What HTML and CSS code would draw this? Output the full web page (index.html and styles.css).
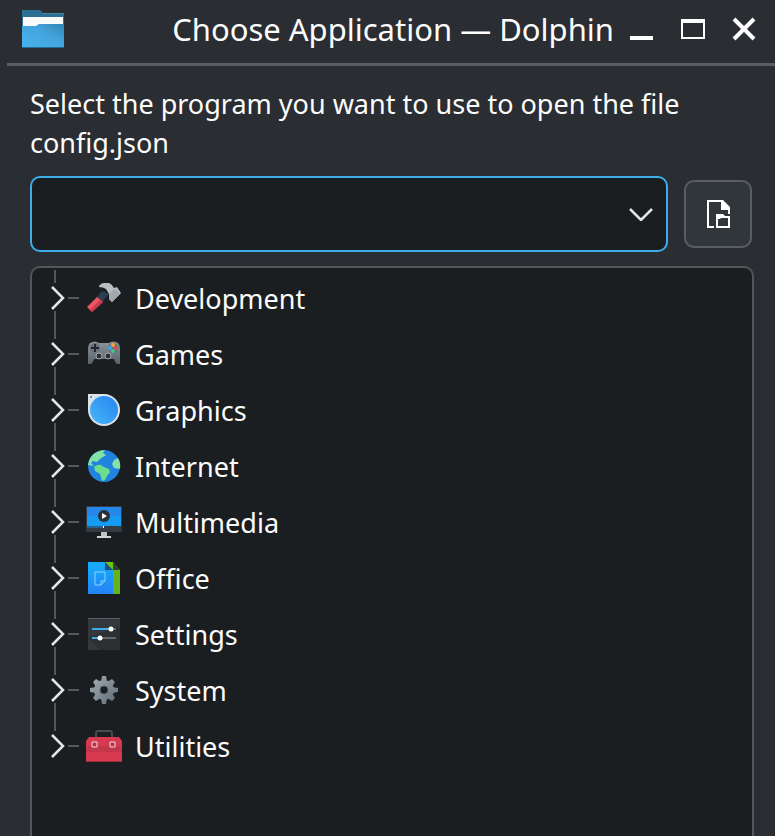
FILE: index.html
```html
<!DOCTYPE html>
<html lang="en">
    <head>
        <meta charset="UTF-8" />
        <meta name="viewport" content="width=device-width, initial-scale=1.0" />
        <title>Choose Application — Dolphin</title>
        <link rel="stylesheet" href="styles.css">
    </head>
    <body>
        <!-- shared tree branch shapes -->
        <svg class="defs" aria-hidden="true">
            <symbol id="branch" viewBox="0 0 32 56">
                <path d="M7 0v13M7 41v15M20 28h11" stroke="#54575a" stroke-width="2" fill="none"/>
                <path d="M4 17l11 11L4 39" stroke="#e4e5e6" stroke-width="2.500" fill="none"/>
            </symbol>
            <symbol id="branch-end" viewBox="0 0 32 56">
                <path d="M7 0v13M20 28h11" stroke="#54575a" stroke-width="2" fill="none"/>
                <path d="M4 17l11 11L4 39" stroke="#e4e5e6" stroke-width="2.500" fill="none"/>
            </symbol>
        </svg>

        <div class="window">
            <header class="titlebar">
                <svg class="app-icon" viewBox="0 0 42 38">
                    <defs>
                        <linearGradient id="folder" x1="0" y1="1" x2="1" y2="0">
                            <stop offset="0" stop-color="#48b4f0"/>
                            <stop offset=".6" stop-color="#43a4dc"/>
                            <stop offset="1" stop-color="#3187b6"/>
                        </linearGradient>
                    </defs>
                    <path d="M0 0h18l3 3h21v20H0z" fill="#2b6f93"/>
                    <path d="M21 3h21v1H21z" fill="#4585a6"/>
                    <path d="M1 7h40v12H1z" fill="#fafafa"/>
                    <path d="M0 16h14l3-2h25v24H0z" fill="url(#folder)"/>
                    <path d="M0 37h42v1H0z" fill="#246b94"/>
                </svg>
                <h1>Choose Application — Dolphin</h1>
                <div class="window-buttons">
                    <button type="button" aria-label="Minimize">
                        <svg viewBox="0 0 24 24"><path d="M0 19h23v4H0z" fill="#fff"/></svg>
                    </button>
                    <button type="button" aria-label="Maximize">
                        <svg viewBox="0 0 24 24"><path d="M0 2h24v20H0zM2 6v14h20V6z" fill="#fff" fill-rule="evenodd"/></svg>
                    </button>
                    <button type="button" aria-label="Close">
                        <svg viewBox="0 0 24 24"><path d="M2 2l20 20M22 2L2 22" stroke="#fff" stroke-width="4"/></svg>
                    </button>
                </div>
            </header>

            <main class="content">
                <label for="program">Select the program you want to use to open the file config.json</label>
                <div class="chooser">
                    <div class="combo">
                        <input type="text" id="program" />
                        <button type="button" aria-label="Show history">
                            <svg viewBox="0 0 24 14"><path d="M1 2l11 11L23 2" stroke="#e4e5e6" stroke-width="2.500" fill="none"/></svg>
                        </button>
                    </div>
                    <button type="button" class="browse" aria-label="Open file dialog">
                        <svg viewBox="0 0 24 28">
                            <path d="M1 0h16l7 7v7h-2v-4h-7V2H3v24h5v2H1z" fill="#fff"/>
                            <path d="M10 14h7l2 2h5v12H10zm2 5v7h10v-8h-7l-1 1z" fill="#fff" fill-rule="evenodd"/>
                        </svg>
                    </button>
                </div>

                <ul class="tree">
                    <li>
                        <button type="button" aria-label="Expand Development"><svg><use href="#branch"/></svg></button>
                        <svg class="icon" viewBox="0 0 36 36">
                            <path d="M11 17l5-6 7 3-7 8z" fill="#2c3e50"/>
                            <path d="M1 27l10-10 6 5-11 10z" fill="#ed5565"/>
                            <path d="M4 30l10-10 3 2-11 10z" fill="#c93b4d"/>
                            <path d="M13 6q2-3 5-3h5q3 1 5 5l3-1 4 6-9 9-3-3v-5l-3-5q-3-2-7-2z" fill="#b9bfc3"/>
                            <path d="M23 14l5-5 3 1 3 4-8 8-3-3z" fill="#a2a9ae"/>
                        </svg>
                        <span>Development</span>
                    </li>
                    <li>
                        <button type="button" aria-label="Expand Games"><svg><use href="#branch"/></svg></button>
                        <svg class="icon" viewBox="0 0 36 36">
                            <defs>
                                <linearGradient id="pad" x1="0" y1="0" x2="0" y2="1">
                                    <stop offset="0" stop-color="#8b949b"/>
                                    <stop offset="1" stop-color="#59636b"/>
                                </linearGradient>
                            </defs>
                            <path d="M4 7q5-3 9 0h10q4-3 9 0 2 2 2 7v14h-3q-2-1-3-5H8q-1 4-3 5H2V14q0-5 2-7z" fill="url(#pad)"/>
                            <circle cx="9" cy="12" r="5" fill="#69727a"/>
                            <path d="M8 8h2v3h3v2h-3v3H8v-3H5v-2h3z" fill="#22272b"/>
                            <circle cx="27" cy="12" r="5" fill="#69727a"/>
                            <circle cx="27" cy="9" r="2" fill="#f9a33d"/>
                            <circle cx="24" cy="12" r="2" fill="#38a7ef"/>
                            <circle cx="30" cy="12" r="2" fill="#e04a5b"/>
                            <circle cx="27" cy="15" r="2" fill="#4ac58c"/>
                            <g fill="#2c3135" stroke="#a4abb0">
                                <circle cx="13" cy="20" r="3"/>
                                <circle cx="22" cy="20" r="3"/>
                            </g>
                        </svg>
                        <span>Games</span>
                    </li>
                    <li>
                        <button type="button" aria-label="Expand Graphics"><svg><use href="#branch"/></svg></button>
                        <svg class="icon" viewBox="0 0 36 36">
                            <defs>
                                <linearGradient id="lens" x1="0" y1="1" x2="1" y2="0">
                                    <stop offset="0" stop-color="#47b9fc"/>
                                    <stop offset="1" stop-color="#2583ed"/>
                                </linearGradient>
                            </defs>
                            <path d="M2 2h16a16 16 0 1 1-16 16z" fill="#dce1e5"/>
                            <circle cx="18" cy="18" r="14" fill="url(#lens)"/>
                            <circle cx="5" cy="5" r="1" fill="#2583ed"/>
                        </svg>
                        <span>Graphics</span>
                    </li>
                    <li>
                        <button type="button" aria-label="Expand Internet"><svg><use href="#branch"/></svg></button>
                        <svg class="icon" viewBox="0 0 36 36">
                            <circle cx="18" cy="18" r="16" fill="#1f83df"/>
                            <path d="M2 17q1-8 7-12 5-3 10-3l-2 3 3 2-6 4-3 3-4-1-2 2 3 3z" fill="#82e2a6"/>
                            <path d="M8 19q3-3 7-2l3 2 5 2 1 3-3 4-2 4-3 1-2-7-5-3z" fill="#6ddc8e"/>
                            <path d="M32 10l-4 2-2 4 2 4 6 1q1-6-2-11z" fill="#82e2a6"/>
                        </svg>
                        <span>Internet</span>
                    </li>
                    <li>
                        <button type="button" aria-label="Expand Multimedia"><svg><use href="#branch"/></svg></button>
                        <svg class="icon" viewBox="0 0 36 36">
                            <path d="M0 2h36v26H0z" fill="#343b42"/>
                            <path d="M1 3h34v19H1z" fill="#159bf1"/>
                            <path d="M1 3h34v9H1z" fill="#2588e8"/>
                            <path d="M1 22h17v2H1z" fill="#23648e"/>
                            <path d="M17 22h1v2h-1z" fill="#fff"/>
                            <circle cx="18" cy="12" r="6" fill="#2b3035"/>
                            <path d="M16 9l5 3-5 3z" fill="#fff"/>
                            <path d="M15 28h6v4h-6z" fill="#bfc4c8"/>
                            <path d="M11 32h14v2H11z" fill="#d2d5d7"/>
                        </svg>
                        <span>Multimedia</span>
                    </li>
                    <li>
                        <button type="button" aria-label="Expand Office"><svg><use href="#branch"/></svg></button>
                        <svg class="icon" viewBox="0 0 36 36">
                            <defs>
                                <linearGradient id="page" x1="0" y1="0" x2="0" y2="1">
                                    <stop offset="0" stop-color="#16aefb"/>
                                    <stop offset="1" stop-color="#2483f4"/>
                                </linearGradient>
                            </defs>
                            <path d="M19 2h8l7 8v24H19z" fill="#62b31d"/>
                            <path d="M2 2h17l8 8v24H2z" fill="url(#page)"/>
                            <path d="M19 2l8 8V2z" fill="#6cc70b"/>
                            <path d="M27 2l7 8h-7z" fill="#363d39"/>
                            <path d="M19 2l8 8h-8z" fill="#214f78"/>
                            <path d="M9 12h10v9l-4 4H9zM15 25v-4h4" fill="none" stroke="#8dd3ff"/>
                        </svg>
                        <span>Office</span>
                    </li>
                    <li>
                        <button type="button" aria-label="Expand Settings"><svg><use href="#branch"/></svg></button>
                        <svg class="icon" viewBox="0 0 36 36">
                            <path d="M2 2h32v32H2z" fill="#34383c"/>
                            <path d="M2 2h32v1H2z" fill="#5b5f62"/>
                            <path d="M2 22l30-12 2 2v22H14z" fill="#2c3033"/>
                            <path d="M6 13h24M6 22h24" stroke="#64686b" stroke-width="2"/>
                            <path d="M6 13h18M6 22h8" stroke="#3daee9" stroke-width="2"/>
                            <circle cx="25" cy="13" r="2.500" fill="#fff"/>
                            <circle cx="14" cy="22" r="2.500" fill="#fff"/>
                        </svg>
                        <span>Settings</span>
                    </li>
                    <li>
                        <button type="button" aria-label="Expand System"><svg><use href="#branch"/></svg></button>
                        <svg class="icon" viewBox="0 0 36 36">
                            <defs>
                                <linearGradient id="gear" x1="0" y1="0" x2="1" y2="1">
                                    <stop offset="0" stop-color="#a0a9b0"/>
                                    <stop offset="1" stop-color="#637079"/>
                                </linearGradient>
                            </defs>
                            <g fill="url(#gear)">
                                <circle cx="18" cy="18" r="10"/>
                                <path d="M16 4h4l1 6h-6zM16 32h4l1-6h-6zM4 16v4l6 1v-6zM32 16v4l-6 1v-6z"/>
                                <path d="M7 10l3-3 5 3-5 5zM29 10l-3-3-5 3 5 5zM7 26l3 3 5-3-5-5zM29 26l-3 3-5-3 5-5z"/>
                            </g>
                            <circle cx="18" cy="18" r="4" fill="#1b1e20" stroke="#525c64"/>
                        </svg>
                        <span>System</span>
                    </li>
                    <li>
                        <button type="button" aria-label="Expand Utilities"><svg><use href="#branch-end"/></svg></button>
                        <svg class="icon" viewBox="0 0 36 36">
                            <path d="M10 10V5q0-2 2-2h12q2 0 2 2v5" fill="none" stroke="#484b4e" stroke-width="2"/>
                            <path d="M3 9h30l3 4v21H0V13z" fill="#d73a50"/>
                            <path d="M0 18h36v6H0z" fill="#c4364a"/>
                            <path d="M0 33h36v1H0z" fill="#9c2d3c"/>
                            <path d="M6 14h5v5H6zM24 14h5v5h-5z" fill="#b63248" stroke="#f1d9dd"/>
                        </svg>
                        <span>Utilities</span>
                    </li>
                </ul>
            </main>
        </div>
    </body>
</html>
```

FILE: styles.css
```css
* {
    margin: 0;
    padding: 0;
    box-sizing: border-box;
    outline: none;
}
body {
    background: #2a2d31;
    color: #fcfcfc;
    font-family: 'Noto Sans', sans-serif;
    font-size: 27px;
}
button {
    background: none;
    border: none;
    color: inherit;
    font: inherit;
}
svg {
    display: block;
    flex: none;
}
.defs {
    position: absolute;
    width: 0;
    height: 0;
}
.window {
    height: 100vh;
    display: flex;
    flex-direction: column;
    overflow: hidden;
}
.titlebar {
    margin-left: 7px;
    padding: 0 19px 5px 15px;
    height: 66px;
    flex: none;
    display: flex;
    align-items: center;
    border-bottom: 3px solid #5a5d61;
}
.app-icon {
    width: 42px;
    height: 38px;
}
.titlebar h1 {
    flex: 1;
    font-size: 31px;
    font-weight: 400;
    line-height: 44px;
    text-align: right;
    white-space: nowrap;
}
.window-buttons {
    margin-left: 16px;
    display: flex;
    gap: 27px;
}
.window-buttons svg {
    width: 24px;
    height: 24px;
}
.content {
    flex: 1;
    min-height: 0;
    padding: 18px 21px 0 30px;
    display: flex;
    flex-direction: column;
}
.content label {
    line-height: 39px;
}
.chooser {
    margin: 14px 2px 14px 0;
    display: flex;
    align-items: center;
    gap: 16px;
}
.combo {
    flex: 1;
    height: 76px;
    padding: 0 13px;
    display: flex;
    align-items: center;
    background: #1b1e20;
    border: 2px solid #3daee9;
    border-radius: 10px;
}
.combo input {
    flex: 1;
    min-width: 0;
    height: 100%;
    background: none;
    border: none;
    color: inherit;
    font: inherit;
}
.combo svg {
    width: 24px;
    height: 14px;
}
.browse {
    width: 68px;
    height: 68px;
    display: flex;
    align-items: center;
    justify-content: center;
    background: #31363a;
    border: 2px solid #5a5d61;
    border-radius: 10px;
}
.browse svg {
    width: 24px;
    height: 28px;
}
.tree {
    flex: 1;
    padding: 2px 16px 0;
    list-style: none;
    background: #1b1e20;
    border: 2px solid #54575a;
    border-bottom: none;
    border-radius: 10px 10px 0 0;
}
.tree li {
    height: 56px;
    display: flex;
    align-items: center;
}
.tree button svg {
    width: 32px;
    height: 56px;
}
.tree .icon {
    width: 36px;
    height: 36px;
    margin: 0 13px 0 6px;
}
```
